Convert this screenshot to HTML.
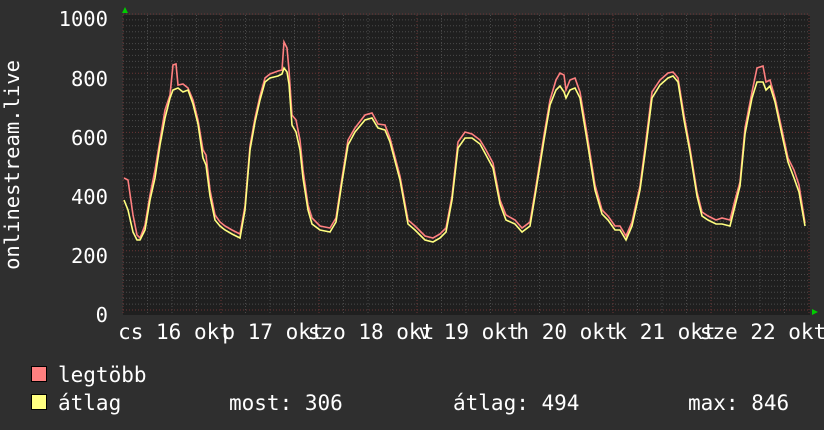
<!DOCTYPE html>
<html><head><meta charset="utf-8"><style>
html,body{margin:0;padding:0;background:#2f2f2f;}
body{width:824px;height:430px;overflow:hidden;position:relative;font-family:"DejaVu Sans Mono","Liberation Mono",monospace;color:#fff;}
</style></head><body>
<svg width="824" height="430" xmlns="http://www.w3.org/2000/svg" style="position:absolute;left:0;top:0">
<rect x="0" y="0" width="824" height="430" fill="#2f2f2f"/>
<rect x="123" y="15" width="687" height="300" fill="#1f1f1f"/>
<g stroke="#4a4a4a" stroke-width="1" stroke-dasharray="1,2">
<path id="hminor" d=""/>
</g>
<g id="grid"></g>
<g font-family="DejaVu Sans Mono, monospace" font-size="20.5" fill="#fff" text-anchor="end">
<text x="108" y="26">1000</text>
<text x="108" y="86">800</text>
<text x="108" y="145">600</text>
<text x="108" y="204">400</text>
<text x="108" y="263">200</text>
<text x="108" y="322">0</text>
</g>
<text transform="translate(19,165) rotate(-90)" font-family="DejaVu Sans Mono, monospace" font-size="20.5" fill="#fff" text-anchor="middle">onlinestream.live</text>
<g font-family="DejaVu Sans Mono, monospace" font-size="21" fill="#fff" text-anchor="middle">
<text x="175" y="339">cs 16 okt</text>
<text x="273" y="339">p 17 okt</text>
<text x="371" y="339">szo 18 okt</text>
<text x="469" y="339">v 19 okt</text>
<text x="567" y="339">h 20 okt</text>
<text x="665" y="339">k 21 okt</text>
<text x="763" y="339">sze 22 okt</text>
</g>
<polyline fill="none" stroke="#ff8080" stroke-width="1.6" points="124,178 128,180 133,215 137,235 140,238 145,225 150,195 155,170 160,140 165,110 170,95 173,65 176,64 178,85 183,84 188,88 193,100 198,120 203,150 206,155 210,190 215,215 220,222 225,226 232,230 240,234 245,206 250,146 255,118 260,96 265,78 270,74 278,71 282,70 284,42 287,48 289,70 292,115 296,120 300,140 303,170 308,205 312,218 320,226 330,228 336,218 342,178 348,140 355,128 365,115 372,113 378,124 385,125 390,138 400,176 408,220 415,226 425,236 433,238 440,234 446,228 452,196 458,142 465,132 472,134 480,140 486,150 493,163 500,200 506,215 515,220 522,228 530,222 536,186 544,135 550,100 556,80 560,73 564,75 566,90 570,80 575,78 580,92 587,134 595,185 602,210 608,216 615,226 620,226 626,236 632,222 640,186 646,140 652,92 660,80 668,73 673,72 678,78 684,115 690,148 697,192 702,212 708,216 716,220 722,218 730,220 735,200 740,182 745,128 752,92 757,68 763,66 766,82 770,80 775,98 782,130 788,158 794,170 799,185 805,223"/>
<polyline fill="none" stroke="#ffff80" stroke-width="1.6" points="124,200 128,210 133,232 137,240 140,240 145,230 150,200 155,178 160,145 165,118 170,98 173,90 178,88 183,92 188,90 193,104 198,124 203,158 206,165 210,196 215,220 220,226 225,230 232,234 240,238 245,210 250,150 255,122 260,100 265,82 270,78 278,76 282,74 284,68 287,72 289,84 292,125 296,132 300,150 303,178 308,210 312,224 320,230 330,232 336,222 342,182 348,145 355,132 365,120 372,118 378,128 385,130 390,142 400,180 408,224 415,230 425,240 433,242 440,238 446,232 452,200 458,148 465,138 472,138 480,144 486,155 493,168 500,204 506,220 515,224 522,232 530,226 536,190 544,140 550,105 556,90 560,86 564,92 566,98 570,90 575,88 580,98 587,140 595,190 602,214 608,220 615,230 620,230 626,240 632,226 640,190 646,146 652,98 660,85 668,78 673,76 678,82 684,120 690,152 697,196 702,216 708,220 716,224 722,224 730,226 735,206 740,186 745,134 752,98 757,82 763,82 766,90 770,86 775,102 782,135 788,162 794,178 799,192 805,226"/>
<polygon points="122,13 128,13 125,7" fill="#00cc00"/>
<polygon points="812,309 812,315 818,312" fill="#00cc00"/>
<rect x="31.5" y="366.5" width="15" height="15" fill="#ff8080" stroke="#000"/>
<rect x="31.5" y="394.5" width="15" height="15" fill="#ffff80" stroke="#000"/>
<g font-family="DejaVu Sans Mono, monospace" font-size="21" fill="#fff">
<text x="58" y="382">legtöbb</text>
<text x="58" y="410">átlag</text>
<text x="229" y="410">most: 306</text>
<text x="453" y="410">átlag: 494</text>
<text x="688" y="410">max: 846</text>
</g>
</svg>
<script>
(function(){
var ns="http://www.w3.org/2000/svg",g=document.getElementById('grid'),d="";
for(var i=0;i<=50;i++){var y=(310-i*5.92).toFixed(1);if(i%10)d+="M123 "+y+"H810";}
document.getElementById('hminor').setAttribute('d',d);
var d2="",d3="";
for(var i=0;i<29;i++){var x=(123+i*24.5).toFixed(1);if(x>810)break;if(i%4)d2+="M"+x+" 15V314";else d3+="M"+x+" 15V314";}
for(var i=0;i<=5;i++){var y=(310-i*59.2).toFixed(1);d3+="M123 "+y+"H810";}
var p=document.createElementNS(ns,'path');p.setAttribute('d',d2);p.setAttribute('stroke','#4a4a4a');p.setAttribute('stroke-dasharray','1,2');g.appendChild(p);
var q=document.createElementNS(ns,'path');q.setAttribute('d',d3);q.setAttribute('stroke','#6b3535');q.setAttribute('stroke-dasharray','1,2');g.appendChild(q);
})();
</script>
</body></html>
